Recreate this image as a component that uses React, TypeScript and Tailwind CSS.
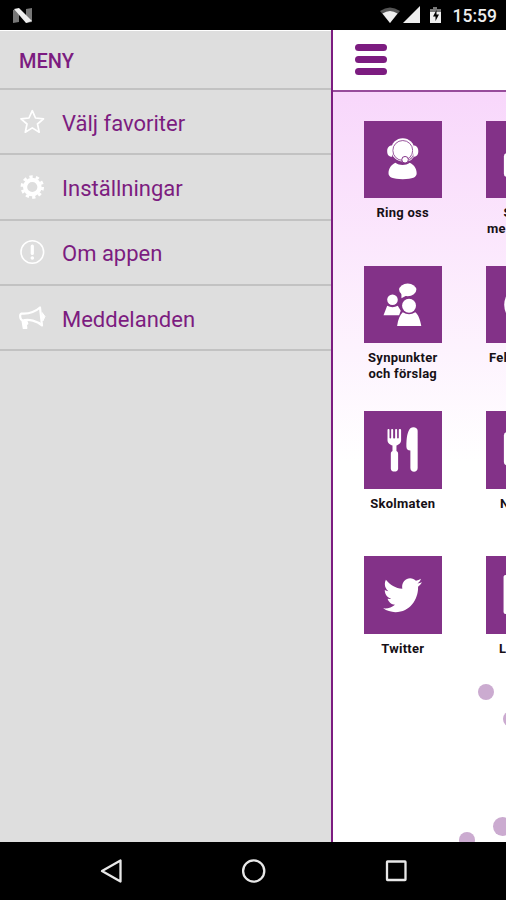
import React from 'react';

const StarIcon = () => (
  <svg className="h-[26px] w-[28px]" viewBox="0 0 28 26" fill="none" stroke="white" strokeWidth="1.7" strokeLinejoin="round">
    <path d="M14.300 1.700l3.200 7.300 8 .8-6 5.200 1.700 8.200-6.900-4.300-7 4.300 1.700-8.200-6-5.200 8-.8z" />
  </svg>
);

const GearIcon = () => (
  <svg className="h-[26px] w-[28px]" viewBox="0 0 28 26" fill="none" stroke="white">
    <circle cx="14.300" cy="13" r="10.3" strokeWidth="2.800" strokeDasharray="3.300 3.172" />
    <circle cx="14.300" cy="13" r="7.200" strokeWidth="4.200" />
  </svg>
);

const InfoIcon = () => (
  <svg className="h-[26px] w-[28px]" viewBox="0 0 28 26" fill="none" stroke="white">
    <circle cx="14.300" cy="13" r="11.3" strokeWidth="1.6" />
    <path d="M14.300 7v7.5" strokeWidth="3.2" strokeLinecap="round" />
    <circle cx="14.300" cy="19" r="1.8" fill="white" stroke="none" />
  </svg>
);

const MegaphoneIcon = () => (
  <svg className="h-[26px] w-[28px]" viewBox="0 0 28 26" fill="none" stroke="white" strokeLinejoin="round">
    <path d="M3.500 8.500C10 9 17 7 22 2.500l2 18C19 16 11 13.800 4.800 15.500C2 15 1.200 9.500 3.500 8.500z" strokeWidth="2.200" />
    <path d="M4 15.500l1.300 7.800h3.500l-.4-3.600 1.400-1-1.200-3.400" fill="white" strokeWidth="1.200" />
    <path d="M24 7.500l3 4-2.200 4.500z" fill="white" strokeWidth="1" />
  </svg>
);

const SupportIcon = () => (
  <g fill="white">
    <path d="M74 158c0-15 9-27 21-32 12 9 31 9 43 0 12 5 21 17 21 32 0 12-12 18-42 18s-43-6-43-18z" />
    <circle cx="117" cy="87" r="35" />
    <circle cx="117" cy="89" r="30" fill="none" stroke="#833288" strokeWidth="2.500" />
    <path d="M85 74c-9 0-15 6-15 17s6 17 15 17zM149 74c9 0 15 6 15 17s-6 17-15 17z" />
    <path d="M149 108c-4 8-10 11-17 12" fill="none" stroke="white" strokeWidth="3" />
    <circle cx="124" cy="117" r="10" stroke="#833288" strokeWidth="3" />
  </g>
);

const PeopleIcon = () => (
  <g fill="white">
    <ellipse cx="132" cy="72" rx="26" ry="19" />
    <path d="M113 80v17l17-9z" />
    <circle cx="86" cy="102" r="16" />
    <path d="M70 120q16 9 32 0l9 15-5 14H59z" />
    <circle cx="136" cy="120" r="21" />
    <path d="M117 140q19 12 38 0c9 7 14 21 18 41h-73c3-20 9-34 17-41z" />
  </g>
);

const CutleryIcon = () => (
  <g fill="white">
    <path d="M71 57c0-4 6-4 6 0v24c0 3 5 3 5 0V57c0-4 6-4 6 0v24c0 3 6 3 6 0V57c0-4 6-4 6 0v24c0 3 5 3 5 0V57c0-4 7-4 7 0v31c0 9-8 14-14 16v17c3 2 5 4 5 8v45c0 12-22 12-22 0v-45c0-4 2-6 5-8v-17c-7-2-15-7-15-16z" />
    <path d="M162 60v112c0 15-22 15-22 0v-53c-8 0-12-4-12-12 0-25 3-46 12-55 8-6 22-3 22 8z" />
  </g>
);

const TwitterIcon = () => (
  <path
    fill="white"
    transform="translate(58 55) scale(.229 .247)"
    d="M459.37 151.716c.325 4.548.325 9.097.325 13.645 0 138.72-105.583 298.558-298.558 298.558-59.452 0-114.68-17.219-161.137-47.106 8.447.974 16.568 1.299 25.34 1.299 49.055 0 94.213-16.568 130.274-44.832-46.132-.975-84.792-31.188-98.112-72.772 6.498.974 12.995 1.624 19.818 1.624 9.421 0 18.843-1.3 27.614-3.573-48.081-9.747-84.143-51.98-84.143-102.985v-1.299c13.969 7.797 30.214 12.67 47.431 13.319-28.264-18.843-46.781-51.005-46.781-87.391 0-19.492 5.197-37.36 14.294-52.954 51.655 63.675 129.3 105.258 216.365 109.807-1.624-7.797-2.599-15.918-2.599-24.04 0-57.828 46.782-104.934 104.934-104.934 30.213 0 57.502 12.67 76.67 33.137 23.715-4.548 46.456-13.32 66.599-25.34-7.798 24.366-24.366 44.833-46.132 57.827 21.117-2.273 41.584-8.122 60.426-16.243-14.292 20.791-32.161 39.308-52.628 54.253z"
  />
);

const menuItems = [
  { label: 'Välj favoriter', icon: <StarIcon /> },
  { label: 'Inställningar', icon: <GearIcon /> },
  { label: 'Om appen', icon: <InfoIcon /> },
  { label: 'Meddelanden', icon: <MegaphoneIcon /> },
];

const tiles = [
  { lines: ['Ring oss'], icon: <SupportIcon /> },
  { lines: ['Synpunkter', 'och förslag'], icon: <PeopleIcon /> },
  { lines: ['Skolmaten'], icon: <CutleryIcon /> },
  { lines: ['Twitter'], icon: <TwitterIcon /> },
];

// Second column, pushed mostly off screen while the drawer is open
const edgeTiles = [
  { lines: [{ text: 'S', pad: 'pl-[17.500px]' }, { text: 'me', pad: 'pl-px' }], icon: <rect x="54" y="97" width="128" height="72" rx="10" fill="white" /> },
  { lines: [{ text: 'Fel', pad: 'pl-[3px]' }], icon: <circle cx="117" cy="117" r="62" fill="white" /> },
  { lines: [{ text: 'N', pad: 'pl-[14px]' }], icon: <rect x="54" y="64" width="128" height="100" rx="10" fill="white" /> },
  { lines: [{ text: 'L', pad: 'pl-[13px]' }], icon: <rect x="53" y="57" width="130" height="118" rx="6" fill="white" /> },
];

function TileSquare({ children }: { children: React.ReactNode }) {
  return (
    <svg className="block size-[77.5px] shrink-0 bg-[#833288]" viewBox="0 0 234 234">
      {children}
    </svg>
  );
}

function StatusBar() {
  return (
    <div className="flex h-[30px] shrink-0 items-center bg-black pl-[13px] pr-[9px] text-white">
      <svg className="mt-px h-4 w-5" viewBox="0 0 20 16">
        <path d="M0 2l6-1v13l-6 1zM13 1l6-1v14l-6 1z" fill="#777" />
        <path d="M1 1l5-1 13 13-6 2z" fill="#eee" />
      </svg>
      <svg className="ml-auto h-[18px] w-[63px]" viewBox="0 0 63 18">
        <path d="M0 5Q10 -2 20 5L10 17z" fill="#555" />
        <path d="M2.500 7.500Q10 2.500 17.500 7.500L10 17z" fill="#eee" />
        <path d="M23 17L40 0v17z" fill="#eee" />
        <path d="M53 1h4v2h4v5H50V3h3z" fill="#777" />
        <path d="M50 6h11v11H50z" fill="#eee" />
        <path d="M56.500 4L53 10.500h2.500V15l3.500-6.500h-2.500z" fill="black" />
      </svg>
      <span className="ml-[10px] mt-[3px] text-[17.500px] font-medium leading-none text-[#eee]">15:59</span>
    </div>
  );
}

function Drawer() {
  return (
    <aside className="w-[331px] shrink-0 bg-[#dedede] text-[#7c1c80]">
      <h1 className="flex h-[60px] items-center border-b-2 border-t border-b-[#c2c2c2] border-t-white pl-[19px] pt-[3px] text-[20px] font-medium">
        MENY
      </h1>
      <ul>
        {menuItems.map((item) => (
          <li key={item.label} className="flex h-[65.300px] items-center border-b-2 border-[#c2c2c2] pl-[18px]">
            {item.icon}
            <span className="ml-4 mt-[3px] text-[22px]">{item.label}</span>
          </li>
        ))}
      </ul>
    </aside>
  );
}

function NavBar() {
  return (
    <nav className="h-[58px] shrink-0 bg-black">
      <svg className="block h-[58px] w-[506px]" viewBox="0 0 506 58" fill="none" stroke="#e8e8e8" strokeWidth="2.300" strokeLinejoin="round">
        <path d="M102 29l18.500-10.500v21z" />
        <circle cx="253.700" cy="29" r="10.600" />
        <rect x="387" y="19.500" width="18.500" height="18.500" rx="0.500" />
      </svg>
    </nav>
  );
}

function App() {
  return (
    <div className="flex h-[900px] w-[506px] flex-col overflow-hidden font-['Roboto',sans-serif]">
      <StatusBar />
      <div className="flex min-h-0 flex-1">
        <Drawer />
        <main className="relative min-w-0 flex-1 overflow-hidden border-l-2 border-[#7c1c80] bg-white">
          <header className="flex h-[61.500px] items-center border-b-2 border-[#974c9b] pl-[22px]">
            <div className="flex flex-col gap-[5px]">
              <span className="h-[7px] w-8 rounded-full bg-[#7c1c80]" />
              <span className="h-[7px] w-8 rounded-full bg-[#7c1c80]" />
              <span className="h-[7px] w-8 rounded-full bg-[#7c1c80]" />
            </div>
          </header>
          <div className="flex h-[751px] gap-[44.500px] bg-linear-to-b from-[#f8d7fb] to-white to-[370px] pl-[31px] pt-[29px] text-[13px] font-bold leading-4 tracking-[0.25px] text-[#161016]">
            <div className="w-[77.500px] shrink-0">
              {tiles.map((tile, i) => (
                <div key={i} className="flex h-[145.300px] flex-col items-center">
                  <TileSquare>{tile.icon}</TileSquare>
                  <div className="mt-[7px] whitespace-nowrap text-center">
                    {tile.lines.map((line) => (
                      <p key={line}>{line}</p>
                    ))}
                  </div>
                </div>
              ))}
            </div>
            <div className="w-[77.500px] shrink-0">
              {edgeTiles.map((tile, i) => (
                <div key={i} className="h-[145.300px]">
                  <TileSquare>{tile.icon}</TileSquare>
                  <div className="mt-[7px]">
                    {tile.lines.map((line) => (
                      <p key={line.text} className={line.pad}>{line.text}</p>
                    ))}
                  </div>
                </div>
              ))}
            </div>
          </div>
          {/* Decorative dots */}
          <span className="absolute left-[144.500px] top-[654px] size-4 rounded-full bg-[#cbabd0]" />
          <span className="absolute left-[170px] top-[681px] size-4 rounded-full bg-[#cbabd0]" />
          <span className="absolute left-[160px] top-[787px] size-[19px] rounded-full bg-[#cbabd0]" />
          <span className="absolute left-[126px] top-[802px] size-4 rounded-full bg-[#cbabd0]" />
        </main>
      </div>
      <NavBar />
    </div>
  );
}

export default App;
